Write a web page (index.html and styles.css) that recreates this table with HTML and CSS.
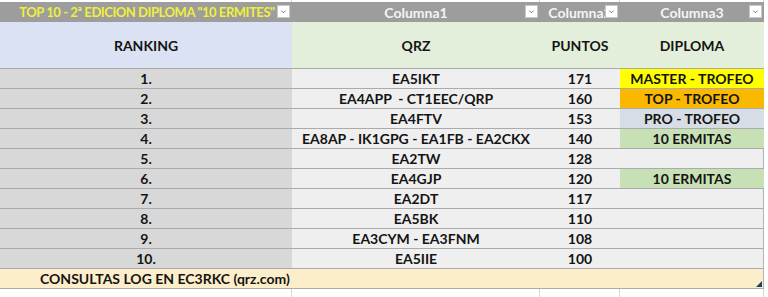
FILE: index.html
```html
<!DOCTYPE html>
<html lang="es">
<head>
<meta charset="utf-8">
<title>TOP 10 - 2ª EDICION DIPLOMA "10 ERMITES"</title>
<link rel="stylesheet" href="styles.css">
</head>
<body>
<div class="sheet">
  <div class="strip top"><span></span><span></span><span></span><span></span></div>

  <div class="row hdr1">
    <div class="cell title"><span class="ttl">TOP 10 - 2ª EDICION DIPLOMA "10 ERMITES"</span><span class="dd"><svg viewBox="0 0 13 13" width="13" height="13"><path d="M4 5.5 L6.5 8 L9 5.5" fill="none" stroke="#555" stroke-width="1"/></svg></span></div>
    <div class="cell">Columna1<span class="dd"><svg viewBox="0 0 13 13" width="13" height="13"><path d="M4 5.5 L6.5 8 L9 5.5" fill="none" stroke="#555" stroke-width="1"/></svg></span></div>
    <div class="cell">Columna2<span class="dd"><svg viewBox="0 0 13 13" width="13" height="13"><path d="M4 5.5 L6.5 8 L9 5.5" fill="none" stroke="#555" stroke-width="1"/></svg></span></div>
    <div class="cell">Columna3<span class="dd"><svg viewBox="0 0 13 13" width="13" height="13"><path d="M4 5.5 L6.5 8 L9 5.5" fill="none" stroke="#555" stroke-width="1"/></svg></span></div>
  </div>

  <div class="row hdr2">
    <div class="cell rank">RANKING</div>
    <div class="cell">QRZ</div>
    <div class="cell">PUNTOS</div>
    <div class="cell">DIPLOMA</div>
  </div>

  <div class="row data"><div class="cell rank">1.</div><div class="cell">EA5IKT</div><div class="cell">171</div><div class="cell master">MASTER - TROFEO</div></div>
  <div class="row data"><div class="cell rank">2.</div><div class="cell">EA4APP&nbsp; - CT1EEC/QRP</div><div class="cell">160</div><div class="cell top10">TOP - TROFEO</div></div>
  <div class="row data"><div class="cell rank">3.</div><div class="cell">EA4FTV</div><div class="cell">153</div><div class="cell pro">PRO - TROFEO</div></div>
  <div class="row data"><div class="cell rank">4.</div><div class="cell">EA8AP - IK1GPG - EA1FB - EA2CKX</div><div class="cell">140</div><div class="cell ermitas">10 ERMITAS</div></div>
  <div class="row data"><div class="cell rank">5.</div><div class="cell">EA2TW</div><div class="cell">128</div><div class="cell"></div></div>
  <div class="row data"><div class="cell rank">6.</div><div class="cell">EA4GJP</div><div class="cell">120</div><div class="cell ermitas">10 ERMITAS</div></div>
  <div class="row data"><div class="cell rank">7.</div><div class="cell">EA2DT</div><div class="cell">117</div><div class="cell"></div></div>
  <div class="row data"><div class="cell rank">8.</div><div class="cell">EA5BK</div><div class="cell">110</div><div class="cell"></div></div>
  <div class="row data"><div class="cell rank">9.</div><div class="cell">EA3CYM - EA3FNM</div><div class="cell">108</div><div class="cell"></div></div>
  <div class="row data"><div class="cell rank">10.</div><div class="cell">EA5IIE</div><div class="cell">100</div><div class="cell"></div></div>

  <div class="foot">CONSULTAS LOG EN EC3RKC (qrz.com)<span class="handle"></span></div>

  <div class="strip bottom"><span></span><span></span><span></span><span></span></div>
</div>
</body>
</html>
```

FILE: styles.css
```css
* { box-sizing: border-box; }
html, body { margin: 0; padding: 0; background: #ffffff; }
body {
  font-family: Lato, "Open Sans", "Liberation Sans", sans-serif;
  font-weight: 700;
  font-size: 14px;
  color: #141414;
}
.sheet {
  width: 764px;
  display: flex;
  flex-direction: column;
}
.row, .strip {
  display: grid;
  grid-template-columns: 292px 248px 80px 144px;
}
.strip span { border-right: 1px solid #d6d6d6; }
.strip.top { height: 2px; }
.strip.bottom { height: 8px; }
.cell {
  display: flex;
  align-items: center;
  justify-content: center;
  white-space: nowrap;
  overflow: hidden;
}
.hdr1 { height: 20px; background: #9d9d9d; }
.hdr1 .cell {
  position: relative;
  color: #f4f4f4;
}
.hdr1 .title { color: #f0f03a; }
.ttl {
  font-size: 13px;
  letter-spacing: -0.45px;
  margin-left: 2px;
}
.dd {
  position: absolute;
  right: 2px;
  top: 3px;
  width: 13px;
  height: 13px;
  background: #ffffff;
  border: 1px solid #c8c8c8;
  display: flex;
}
.dd svg { display: block; width: 11px; height: 11px; }
.hdr2 {
  height: 47px;
  border-bottom: 1px solid #a9a9a9;
  background: #e3efdb;
}
.hdr2 .rank { background: #dae2f3; }
.data {
  height: 20px;
  border-bottom: 1px solid #ababab;
  background: #efefef;
  border-right: 1px solid #b5b5b5;
}
.data .rank { background: #d8d8d8; }
.master { background: #ffff00; }
.top10 { background: #fbb800; }
.pro { background: #d7dde5; }
.ermitas { background: #c7e0b6; }
.foot {
  position: relative;
  height: 20px;
  background: #fdeecb;
  border-bottom: 1px solid #ababab;
  border-right: 1px solid #b5b5b5;
  padding-left: 40px;
  display: flex;
  align-items: center;
}
.handle {
  position: absolute;
  right: 1px;
  bottom: 1px;
  width: 0;
  height: 0;
  border-left: 6px solid transparent;
  border-bottom: 6px solid #1d4160;
}
```
